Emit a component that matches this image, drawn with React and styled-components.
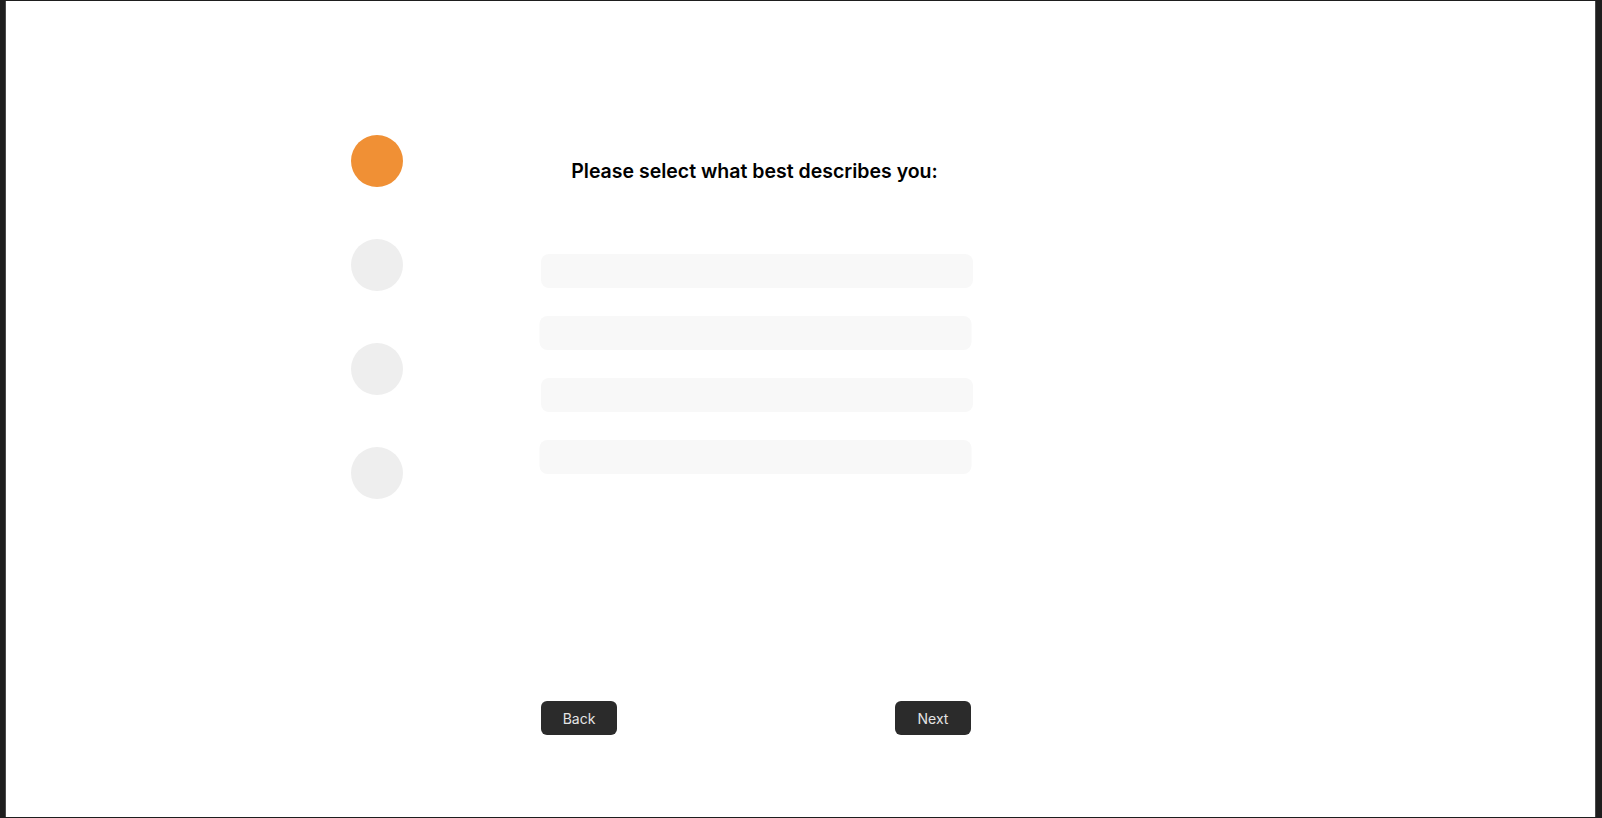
import React from 'react'
import styled, { createGlobalStyle } from 'styled-components'

const GlobalStyle = createGlobalStyle`
  html, body {
    margin: 0;
    padding: 0;
    background: #1e1e1e;
  }
  body {
    font-family: Inter, "Noto Sans", "Liberation Sans", sans-serif;
    overflow: hidden;
  }
`

const Frame = styled.div`
  box-sizing: border-box;
  margin: 1px 0 0 5px;
  width: 1591px;
  height: 816px;
  background: #ffffff;
  border-left: 1px solid #4a4a4a;
  border-right: 1px solid #4a4a4a;
  display: flex;
  align-items: flex-start;
  padding: 134px 0 0 345px;
`

const Stepper = styled.div`
  display: flex;
  flex-direction: column;
  gap: 52px;
  width: 52px;
`

const Dot = styled.div`
  width: 52px;
  height: 52px;
  border-radius: 50%;
  background: ${p => (p.active ? '#f09035' : '#eeeeee')};
`

const Content = styled.div`
  margin-left: 138px;
  width: 432px;
  display: flex;
  flex-direction: column;
`

const Title = styled.h1`
  margin: 24px 0 0;
  padding-right: 5px;
  font-size: 19.5px;
  line-height: 24px;
  font-weight: 600;
  color: #000;
  text-align: center;
`

const Options = styled.div`
  margin-top: 71px;
  display: flex;
  flex-direction: column;
  gap: 28px;
`

const Option = styled.div`
  height: 34px;
  border-radius: 8px;
  background: #f8f8f8;
  transform: translateX(${p => p.shift || 0}px);
`

const Footer = styled.div`
  margin-top: 227px;
  width: 430px;
  display: flex;
  justify-content: space-between;
`

const Button = styled.button`
  box-sizing: border-box;
  width: 76px;
  height: 34px;
  border: none;
  border-radius: 6px;
  background: #2b2b2b;
  color: #e4e4e4;
  font-family: Inter, "Noto Sans", "Liberation Sans", sans-serif;
  font-size: 14px;
  font-weight: 400;
  cursor: pointer;
`

const steps = [true, false, false, false]
const options = [0, -1.5, 0, -1.5]

export default function App() {
  return (
    <>
      <GlobalStyle />
      <Frame>
        <Stepper>
          {steps.map((a, i) => (
            <Dot key={i} active={a} />
          ))}
        </Stepper>
        <Content>
          <Title>Please select what best describes you:</Title>
          <Options>
            {options.map((s, i) => (
              <Option key={i} shift={s} />
            ))}
          </Options>
          <Footer>
            <Button>Back</Button>
            <Button>Next</Button>
          </Footer>
        </Content>
      </Frame>
    </>
  )
}
